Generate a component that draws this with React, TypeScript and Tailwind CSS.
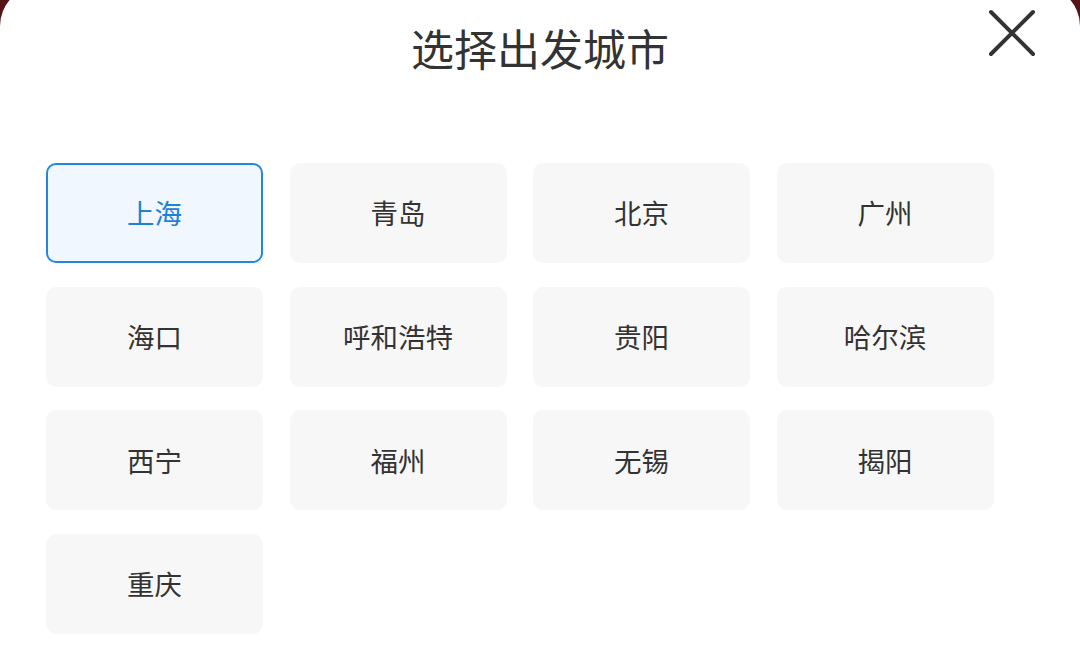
const cities = [
  "上海",
  "青岛",
  "北京",
  "广州",
  "海口",
  "呼和浩特",
  "贵阳",
  "哈尔滨",
  "西宁",
  "福州",
  "无锡",
  "揭阳",
  "重庆",
];

function CloseIcon() {
  return (
    <svg width="48" height="48" viewBox="0 0 48 48" fill="none">
      <path
        d="M3 3L45 45M45 3L3 45"
        stroke="#333333"
        strokeWidth="4"
        strokeLinecap="round"
      />
    </svg>
  );
}

export default function App() {
  const selected = "上海";

  return (
    <div
      className="w-[1080px] h-[660px] overflow-hidden bg-[#551515]"
      style={{ fontFamily: '"Noto Sans CJK SC", "Noto Sans", sans-serif' }}
    >
      <div className="-mt-[14px] h-[700px] rounded-t-[40px] bg-white pt-[14px]">
        <div className="relative flex h-[94px] items-center justify-center">
          <h1 className="text-[43px] leading-none text-[#333333]">
            选择出发城市
          </h1>
          <button className="absolute left-[988px] top-[9px]">
            <CloseIcon />
          </button>
        </div>

        <div className="mt-[69px] ml-[46px] grid grid-cols-[repeat(4,217px)] gap-x-[26.5px] gap-y-[23.7px]">
          {cities.map((city) =>
            city === selected ? (
              <div
                key={city}
                className="flex h-[100px] items-center justify-center rounded-[10px] border-2 border-[#2387e0] bg-[#f0f7ff] text-[27.5px] text-[#1f80d9]"
              >
                {city}
              </div>
            ) : (
              <div
                key={city}
                className="flex h-[100px] items-center justify-center rounded-[10px] bg-[#f7f7f7] text-[27.5px] text-[#333333]"
              >
                {city}
              </div>
            )
          )}
        </div>
      </div>
    </div>
  );
}
